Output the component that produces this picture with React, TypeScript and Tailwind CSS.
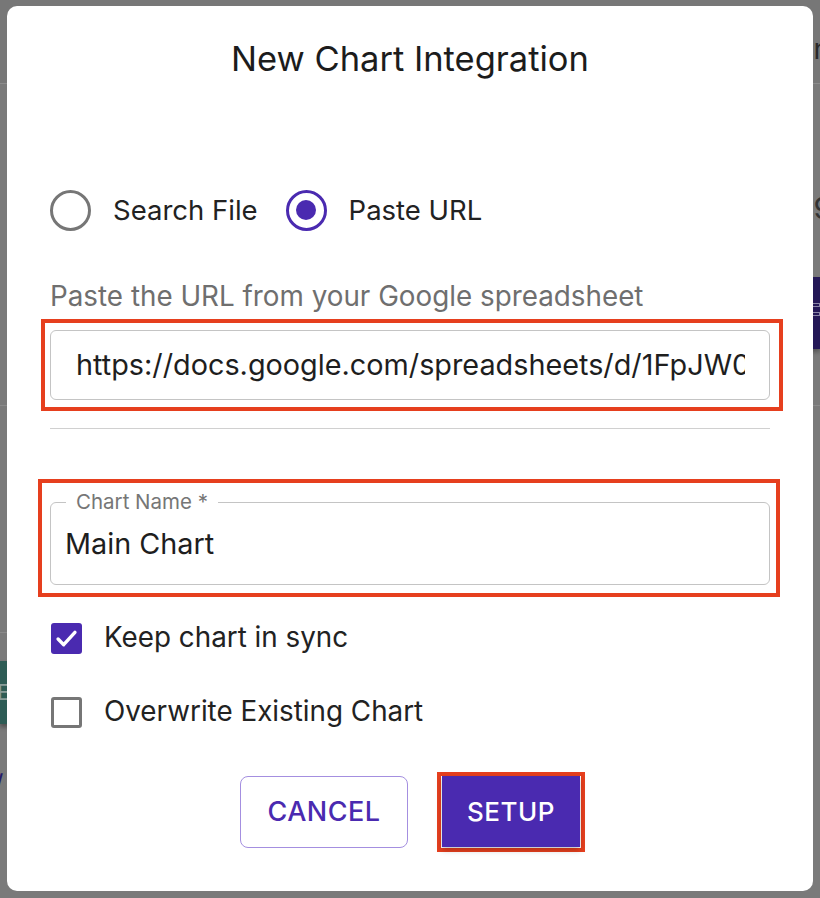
import React from 'react'

const font = { fontFamily: 'Inter, "Noto Sans", sans-serif' }

const Radio = ({ checked, label }: { checked?: boolean; label: string }) => (
    <div className="flex items-center gap-[22px]">
        <span
            className={
                checked
                    ? 'flex h-[41px] w-[41px] items-center justify-center rounded-full border-[3.5px] border-[#4a2ab0]'
                    : 'flex h-[41px] w-[41px] items-center justify-center rounded-full border-[3.5px] border-[#767676]'
            }
        >
            {checked && <span className="h-[20px] w-[20px] rounded-full bg-[#4a2ab0]" />}
        </span>
        <span className="text-[27.5px] leading-[48px] text-[#222]">{label}</span>
    </div>
)

const Checkbox = ({ checked, label }: { checked?: boolean; label: string }) => (
    <div className="flex h-[40px] items-center gap-[22px] pl-[1px]">
        {checked ? (
            <span className="flex h-[31px] w-[31px] items-center justify-center rounded-[3px] bg-[#4a2ab0]">
                <svg width="27" height="27" viewBox="0 0 24 24" fill="none">
                    <path d="M4.5 12.5l5 5 10-11" stroke="white" strokeWidth="3" strokeLinecap="round" strokeLinejoin="round" />
                </svg>
            </span>
        ) : (
            <span className="h-[31px] w-[31px] rounded-[3px] border-[3px] border-[#767676]" />
        )}
        <span className="text-[27.8px] text-[#222]">{label}</span>
    </div>
)

export default function App() {
    return (
        <div className="relative h-[898px] w-[820px] overflow-hidden bg-[#7a7a7a] px-[7px] pt-[6px]" style={font}>
            {/* bits of the page behind the backdrop */}
            <div className="absolute left-0 top-0 h-[83px] w-full bg-[#777]" />
            <div className="absolute left-0 top-[83px] h-[1px] w-full bg-[#8c8c8c]" />
            <span className="absolute right-[-10px] top-[28px] text-[28px] text-[#2a2a2a]">n</span>
            <span className="absolute right-[-12px] top-[186px] text-[30px] text-[#333]">9</span>
            <div className="absolute right-0 top-[277px] flex h-[72px] w-[12px] flex-col gap-[5px] bg-[#241857] pt-[26px] shadow-[0_3px_4px_rgba(0,0,0,0.3)]">
                <span className="h-[4px] w-full border border-[#8b86a8]" />
                <span className="h-[4px] w-full border border-[#8b86a8]" />
            </div>
            <div className="absolute left-0 top-[405px] h-[1px] w-full bg-[#8a8a8a]" />
            <div className="absolute left-0 top-[632px] h-[1px] w-[10px] bg-[#8a8a8a]" />
            <div className="absolute left-0 top-[661px] flex h-[63px] w-[10px] items-center overflow-hidden bg-[#2e5c55] shadow-[0_3px_4px_rgba(0,0,0,0.35)]">
                <span className="ml-[-3px] text-[22px] text-[#8a9d99]">E</span>
            </div>
            <span className="absolute left-[-6px] top-[764px] text-[26px] text-[#241a6a]">/</span>

            <div className="relative z-10 h-[885px] w-[806px] rounded-[10px] bg-white px-[43px]">
                <h1 className="pt-[32px] text-center text-[34.5px] font-normal leading-[42px] text-[#1c1c1c]">
                    New Chart Integration
                </h1>

                <div className="mt-[106px] flex items-center gap-[28px]">
                    <Radio label="Search File" />
                    <Radio checked label="Paste URL" />
                </div>

                <p className="mt-[44px] text-[27.8px] leading-[36px] text-[#6f6f6f]">
                    Paste the URL from your Google spreadsheet
                </p>

                <div className="-ml-[9px] -mr-[13px] mt-[5px] border-[4px] border-[#e63f1e] pb-[7px] pl-[5px] pr-[9px] pt-[7px]">
                    <div className="flex h-[70px] items-center rounded-[6px] border border-[#c4c4c4] pl-[25px] pr-[24px]">
                        <span className="overflow-hidden whitespace-nowrap text-[28.8px] text-[#1e1e1e]">
                            https://docs.google.com/spreadsheets/d/1FpJW0
                        </span>
                    </div>
                </div>

                <div className="mt-[17px] h-[1px] bg-[#d0d0d0]" />

                <div className="-ml-[12px] -mr-[10px] mt-[50px] border-[4px] border-[#e63f1e] pb-[8px] pl-[8px] pr-[6px] pt-[19px]">
                    <div className="relative flex h-[83px] items-center rounded-[6px] border border-[#c4c4c4] pl-[14px]">
                        <span className="absolute left-[15px] top-[-14px] bg-white px-[10px] text-[20.5px] leading-[26px] text-[#767676]">
                            Chart Name *
                        </span>
                        <span className="text-[28.8px] text-[#1e1e1e]">Main Chart</span>
                    </div>
                </div>

                <div className="mt-[21px]">
                    <Checkbox checked label="Keep chart in sync" />
                </div>
                <div className="mt-[34px]">
                    <Checkbox label="Overwrite Existing Chart" />
                </div>

                <div className="mt-[40px] flex items-center justify-center gap-[29px] pl-[5px]">
                    <button className="h-[72px] w-[168px] rounded-[8px] border border-[#a48fe0] text-[27px] font-medium tracking-[0.5px] text-[#4a2ab0]">
                        CANCEL
                    </button>
                    <div className="border-[4px] border-[#e63f1e] px-[1px] pb-[1px]">
                        <button className="h-[71px] w-[138px] bg-[#4a2ab0] text-[26px] font-medium tracking-[0.5px] text-white shadow-[0_3px_6px_rgba(0,0,0,0.25)]">
                            SETUP
                        </button>
                    </div>
                </div>
            </div>
        </div>
    )
}
